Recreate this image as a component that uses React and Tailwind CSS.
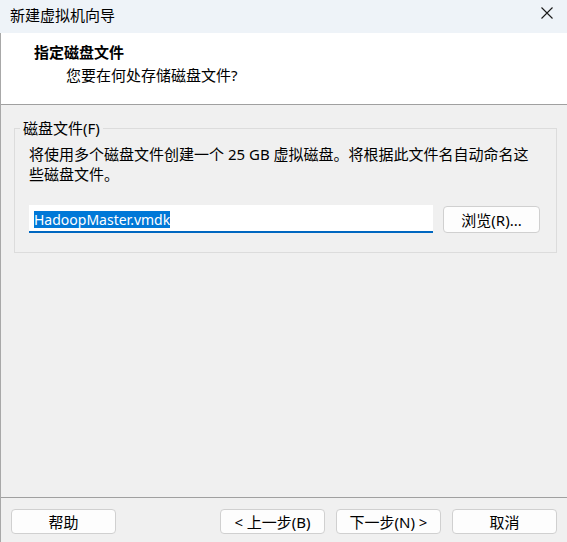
export default function App() {
  const btn =
    'h-[25px] rounded-[4px] border border-[#d0d0d0] bg-[#fdfdfd] text-[15px] leading-[20px] text-black flex items-center justify-center'

  return (
    <div
      className="w-[567px] h-[542px] flex flex-col bg-[#f0f0f0] text-black overflow-hidden"
      style={{ fontFamily: '"Noto Sans", "Noto Sans CJK SC", sans-serif' }}
    >
      {/* title bar */}
      <div className="h-[33px] shrink-0 bg-[#eef3f8] flex items-center justify-between pl-[10px] pr-[14px]">
        <span className="text-[15px] leading-[20px] -mt-[3px]">新建虚拟机向导</span>
        <svg width="12" height="12" viewBox="0 0 12 12" className="-mt-[7px]">
          <path d="M0.5 0.5 L11.5 11.5 M11.5 0.5 L0.5 11.5" stroke="#1a1a1a" strokeWidth="1.1" fill="none" />
        </svg>
      </div>

      <div className="flex-1 flex flex-col border-l border-[#a8a8a8]">
        {/* header */}
        <div className="h-[72px] shrink-0 bg-white border-b border-[#a0a0a0] pt-[9px]">
          <div className="pl-[33px] text-[15px] leading-[20px] font-bold">指定磁盘文件</div>
          <div className="pl-[65px] text-[15px] leading-[20px] mt-[3px]">您要在何处存储磁盘文件?</div>
        </div>

        {/* body */}
        <div className="flex-1 pt-[13px] pl-[13px] pr-[10px]">
          <fieldset className="border border-[#dcdcdc] px-0 pb-[19px]">
            <legend className="ml-[5px] px-[3px] text-[15px] leading-[20px]">磁盘文件(F)</legend>
            <div className="pl-[14px] pr-[16px]">
              <div className="mt-[6px] text-[15px] leading-[20px] whitespace-nowrap">
                <div>将使用多个磁盘文件创建一个 25 GB 虚拟磁盘。将根据此文件名自动命名这</div>
                <div>些磁盘文件。</div>
              </div>
              <div className="mt-[21px] flex items-start gap-[10px]">
                <div className="w-[404px] h-[28px] bg-white border-b-2 border-[#0067c0] pl-[5px] pt-[2px]">
                  <span className="bg-[#0078d7] text-white text-[14px] leading-[17px] inline-block">
                    HadoopMaster.vmdk
                  </span>
                </div>
                <button className={btn + ' w-[97px] h-[27px] mt-[1px]'}>浏览(R)...</button>
              </div>
            </div>
          </fieldset>
        </div>

        {/* footer */}
        <div className="shrink-0 border-t border-[#a0a0a0] pt-[11px] pb-[8px] pl-[10px] pr-[10px] flex items-center">
          <button className={btn + ' w-[105px]'}>帮助</button>
          <div className="flex-1" />
          <button className={btn + ' w-[105px]'}>&lt; 上一步(B)</button>
          <button className={btn + ' w-[105px] ml-[11px] border-[#0067c0]'}>下一步(N) &gt;</button>
          <button className={btn + ' w-[105px] ml-[11px]'}>取消</button>
        </div>
      </div>
    </div>
  )
}
